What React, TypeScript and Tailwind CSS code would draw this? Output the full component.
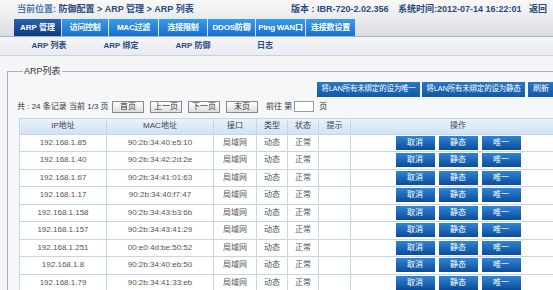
import React from "react";

const tabs = ["ARP 管理", "访问控制", "MAC过滤", "连接限制", "DDOS防御", "Ping WAN口", "连接数设置"];
const tabWidths = [47, 46, 49, 48, 47, 49, 49];
const subNav = ["ARP 列表", "ARP 绑定", "ARP 防御", "日志"];

const rows = [
  ["192.168.1.85", "90:2b:34:40:e5:10"],
  ["192.168.1.40", "90:2b:34:42:2d:2e"],
  ["192.168.1.67", "90:2b:34:41:01:63"],
  ["192.168.1.17", "90:2b:34:40:f7:47"],
  ["192.168.1.158", "90:2b:34:43:b3:6b"],
  ["192.168.1.157", "90:2b:34:43:41:29"],
  ["192.168.1.251", "00:e0:4d:be:50:52"],
  ["192.168.1.8", "90:2b:34:40:eb:50"],
  ["192.168.1.79", "90:2b:34:41:33:eb"],
];

const cols = [87, 107, 43, 31, 31, 32, 215];

function PageBtn({ label }: { label: string }) {
  return (
    <button className="h-[12px] w-[32px] border border-[#8a8a8a] bg-gradient-to-b from-[#ffffff] to-[#dedede] text-[8px] leading-[10px] text-[#333]">
      {label}
    </button>
  );
}

function OpBtn({ label }: { label: string }) {
  return (
    <button className="h-[14px] w-[39px] bg-gradient-to-b from-[#2f86d6] to-[#0b4c9a] text-[8px] leading-[14px] text-white">
      {label}
    </button>
  );
}

export default function App() {
  return (
    <div
      className="relative h-[290px] w-[553px] overflow-hidden bg-[#f3f5f7]"
      style={{ fontFamily: '"Liberation Sans", "Noto Sans CJK SC", sans-serif' }}
    >
      {/* header */}
      <div className="h-[37px] border-b border-[#9db4cc] bg-gradient-to-b from-[#f9f9f9] to-[#dadde1]">
        <div className="flex h-[19px] items-center whitespace-nowrap text-[9px]">
          <div className="w-[291px] pl-[17px] font-bold text-[#2a4a80]">
            <span className="text-[#4f76b0]">当前位置:</span> 防御配置 &gt; ARP 管理 &gt; ARP 列表
          </div>
          <div className="w-[107px] font-bold text-[#2a4a80]">版本 : IBR-720-2.02.356</div>
          <div className="w-[131px] font-bold text-[#2a4a80]">系统时间:2012-07-14 16:22:01</div>
          <div className="font-bold text-[#2a4a80]">返回</div>
        </div>
        <div className="flex h-[17px] gap-[1px] pl-[14px]">
          {tabs.map((t, i) => (
            <div
              key={t}
              style={{ width: tabWidths[i] }}
              className={
                i === 0
                  ? "flex h-[17px] items-center justify-center whitespace-nowrap bg-gradient-to-b from-[#2b62b0] to-[#0f3b80] text-[8px] font-bold text-white"
                  : "flex h-[17px] items-center justify-center whitespace-nowrap bg-gradient-to-b from-[#3a9cec] to-[#1670cb] text-[8px] font-bold tracking-[-0.2px] text-white"
              }
            >
              {t}
            </div>
          ))}
        </div>
      </div>

      {/* sub nav */}
      <div className="flex h-[19px] items-center border-b border-[#cdd2d8] bg-gradient-to-b from-[#f4f5f7] to-[#e9ebee] pl-[13px]">
        {subNav.map((s) => (
          <div key={s} className="w-[72px] text-center text-[8px] font-bold text-[#2a4a80]">
            {s}
          </div>
        ))}
      </div>

      {/* content */}
      <fieldset className="ml-[7px] mt-[9px] w-[580px] border border-[#a9b1ba] bg-[#f6f7f9] pb-4 pl-[11px]">
        <legend className="ml-[4px] px-[1px] text-[9px] text-[#333]">ARP列表</legend>
        <div className="flex gap-[2px] whitespace-nowrap pl-[298px] pt-[3px]">
          <button className="h-[15px] w-[103px] bg-gradient-to-b from-[#2a74c2] to-[#0f5aa8] text-[7.5px] tracking-[-0.2px] text-white">
            将LAN所有未绑定的设为唯一
          </button>
          <button className="h-[15px] w-[103px] bg-gradient-to-b from-[#2a74c2] to-[#0f5aa8] text-[7.5px] tracking-[-0.2px] text-white">
            将LAN所有未绑定的设为静态
          </button>
          <button className="ml-[1px] h-[15px] w-[40px] bg-gradient-to-b from-[#2a74c2] to-[#0f5aa8] pr-[14px] text-[8px] text-white">
            刷新
          </button>
        </div>

        <div className="mt-[3px] flex h-[14px] items-center whitespace-nowrap text-[8px] text-[#333]">
          <span className="-ml-[2px] w-[95px]">共 : 24 条记录 当前 1/3 页</span>
          <div className="flex gap-[6px]">
            <PageBtn label="首页" />
            <PageBtn label="上一页" />
            <PageBtn label="下一页" />
            <PageBtn label="末页" />
          </div>
          <span className="ml-[8px]">前往 第</span>
          <input className="ml-[2px] h-[11px] w-[20px] border border-[#999] bg-white" />
          <span className="ml-[5px]">页</span>
        </div>

        {/* table */}
        <div className="mt-[4px] w-[547px] border-l border-t border-[#c4d6ea] text-[8px] text-[#555]">
          <div className="flex h-[16px] bg-gradient-to-b from-[#eaf2fb] to-[#cfe1f4] text-[#444]">
            {["IP地址", "MAC地址", "接口", "类型", "状态", "提示", "操作"].map((h, i) => (
              <div
                key={h}
                style={{ width: cols[i] }}
                className="flex items-center justify-center border-b border-r border-[#c4d6ea]"
              >
                {h}
              </div>
            ))}
          </div>
          {rows.map(([ip, mac]) => (
            <div key={ip} className="flex h-[17.5px] bg-white">
              <div style={{ width: cols[0] }} className="flex items-center justify-center border-b border-r border-[#c4d6ea]">{ip}</div>
              <div style={{ width: cols[1] }} className="flex items-center justify-center border-b border-r border-[#c4d6ea]">{mac}</div>
              <div style={{ width: cols[2] }} className="flex items-center justify-center border-b border-r border-[#c4d6ea]">局域网</div>
              <div style={{ width: cols[3] }} className="flex items-center justify-center border-b border-r border-[#c4d6ea]">动态</div>
              <div style={{ width: cols[4] }} className="flex items-center justify-center border-b border-r border-[#c4d6ea]">正常</div>
              <div style={{ width: cols[5] }} className="border-b border-r border-[#c4d6ea]"></div>
              <div style={{ width: cols[6] }} className="flex items-center justify-center gap-[4px] border-b border-r border-[#c4d6ea]">
                <OpBtn label="取消" />
                <OpBtn label="静态" />
                <OpBtn label="唯一" />
              </div>
            </div>
          ))}
        </div>
      </fieldset>
    </div>
  );
}
